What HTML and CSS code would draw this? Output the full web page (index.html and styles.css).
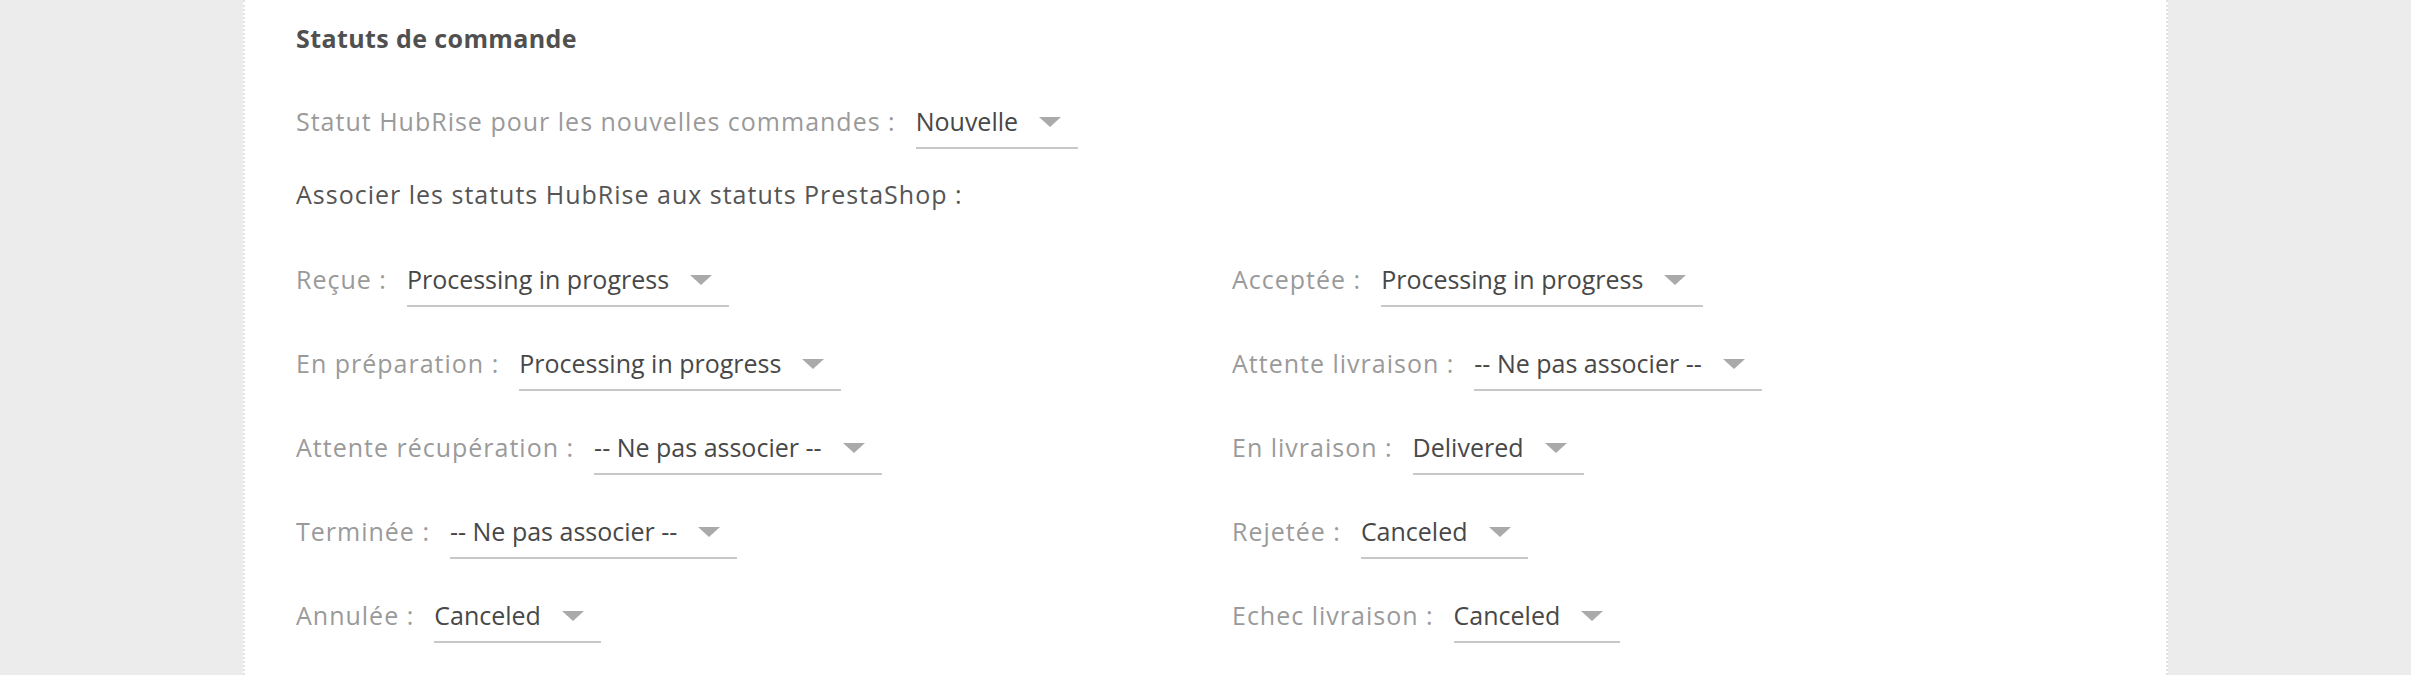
FILE: index.html
```html
<!DOCTYPE html>
<html>
<head>
  <title>HubRise - Statuts de commande</title>
  <meta charset="utf-8" />
  <link rel="stylesheet" href="styles.css">
</head>
<body>
  <div class="panel">
    <h3 class="panel-title">Statuts de commande</h3>

    <div class="field field-new">
      <label>Statut HubRise pour les nouvelles commandes :</label>
      <div class="select"><span>Nouvelle</span><i class="caret"></i></div>
    </div>

    <p class="lead">Associer les statuts HubRise aux statuts PrestaShop :</p>

    <div class="mapping">
      <div class="field">
        <label>Reçue :</label>
        <div class="select"><span>Processing in progress</span><i class="caret"></i></div>
      </div>
      <div class="field">
        <label>Acceptée :</label>
        <div class="select"><span>Processing in progress</span><i class="caret"></i></div>
      </div>
      <div class="field">
        <label>En préparation :</label>
        <div class="select"><span>Processing in progress</span><i class="caret"></i></div>
      </div>
      <div class="field">
        <label>Attente livraison :</label>
        <div class="select"><span>-- Ne pas associer --</span><i class="caret"></i></div>
      </div>
      <div class="field">
        <label>Attente récupération :</label>
        <div class="select"><span>-- Ne pas associer --</span><i class="caret"></i></div>
      </div>
      <div class="field">
        <label>En livraison :</label>
        <div class="select"><span>Delivered</span><i class="caret"></i></div>
      </div>
      <div class="field">
        <label>Terminée :</label>
        <div class="select"><span>-- Ne pas associer --</span><i class="caret"></i></div>
      </div>
      <div class="field">
        <label>Rejetée :</label>
        <div class="select"><span>Canceled</span><i class="caret"></i></div>
      </div>
      <div class="field">
        <label>Annulée :</label>
        <div class="select"><span>Canceled</span><i class="caret"></i></div>
      </div>
      <div class="field">
        <label>Echec livraison :</label>
        <div class="select"><span>Canceled</span><i class="caret"></i></div>
      </div>
    </div>
  </div>
</body>
</html>
```

FILE: styles.css
```css
body {
  font-family: 'Open Sans', 'Noto Sans', sans-serif;
  font-size: 25px;
  background-color: #ececec;
  margin: 0;
  height: 675px;
  overflow: hidden;
}
.panel {
  width: 1870px;
  margin: 0 auto;
  padding: 23px 0 0 51px;
  background-color: #fff;
  border-left: 2px dotted #e2e2e2;
  border-right: 2px dotted #e2e2e2;
  height: 700px;
  box-sizing: content-box;
}
.panel-title {
  font-size: 25px;
  line-height: 30px;
  font-weight: bold;
  letter-spacing: 0.4px;
  color: #505050;
  margin: 0 0 53px 0;
}
.lead {
  color: #555;
  line-height: 30px;
  letter-spacing: 1px;
  margin: 30px 0 55px 0;
}
.mapping {
  display: grid;
  grid-template-columns: 885px 885px;
  column-gap: 51px;
  row-gap: 41px;
}
.field {
  display: flex;
  align-items: flex-start;
  gap: 20px;
  line-height: 30px;
}
.field label {
  color: #9a9a9a;
  letter-spacing: 1px;
}
.select {
  display: flex;
  align-items: center;
  padding-bottom: 11px;
  border-bottom: 2px solid #c8c8c8;
  color: #484848;
}
.caret {
  width: 0;
  height: 0;
  margin: 2px 17px 0 21px;
  border-left: 11px solid transparent;
  border-right: 11px solid transparent;
  border-top: 10px solid #aaa;
}
```
